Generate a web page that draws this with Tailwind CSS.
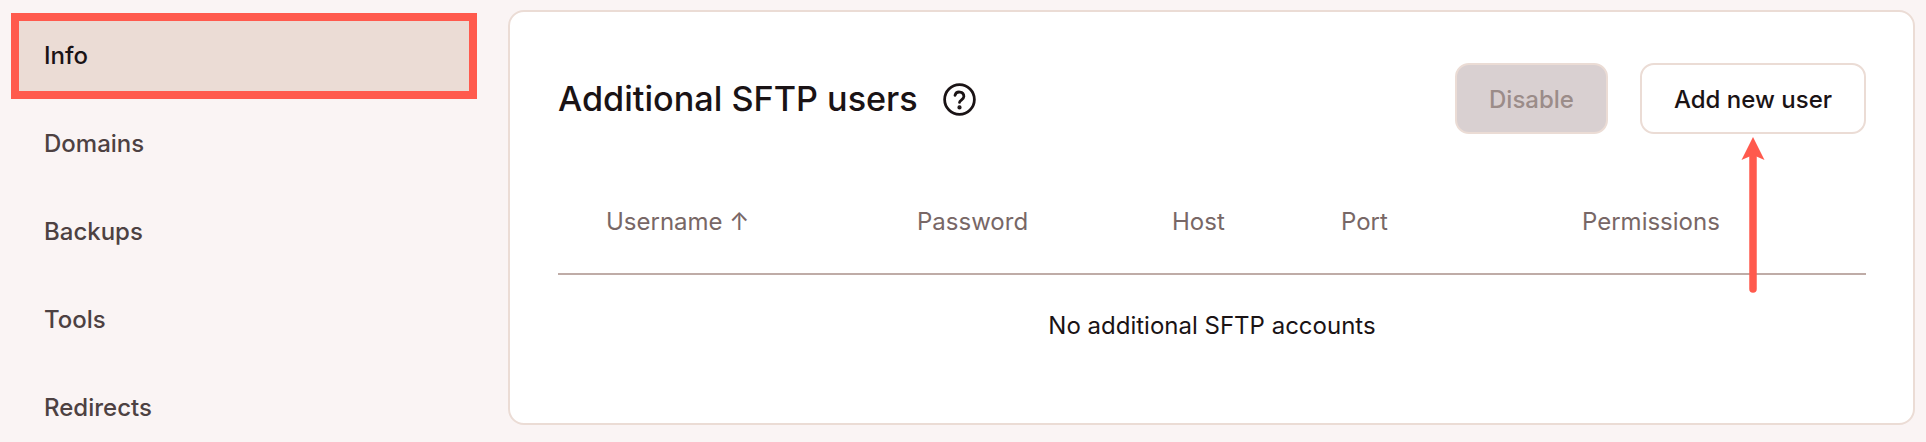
<!DOCTYPE html>
<html lang="en">
<head>
  <meta charset="UTF-8">
  <title>Additional SFTP users</title>
  <script src="https://cdn.jsdelivr.net/npm/@tailwindcss/browser@4"></script>
</head>
<body class="bg-[#faf4f4] h-[442px] overflow-hidden font-['Inter',sans-serif] text-[#1a1315]">

  <div class="flex h-[442px]">
    <!-- Sidebar -->
    <nav class="w-[508px] shrink-0 pl-[11px] pt-[13px] text-[24px] font-medium text-[#4d4142]">
      <a class="flex items-center w-[466px] h-[86px] pl-[25px] bg-[#ebdcd5] border-8 border-[#ff5a4d] text-[#1a1315]">Info</a>
      <a class="flex items-center h-[88px] pl-[33px] mt-[1px]">Domains</a>
      <a class="flex items-center h-[88px] pl-[33px]">Backups</a>
      <a class="flex items-center h-[88px] pl-[33px]">Tools</a>
      <a class="flex items-center h-[88px] pl-[33px]">Redirects</a>
    </nav>

    <!-- Card -->
    <main class="relative w-[1407px] h-[415px] mt-[10px] bg-white border-2 border-[#ebdcd5] rounded-[16px] pl-[48px] pr-[47px] pt-[51px]">
      <div class="flex items-center justify-between">
        <div class="flex items-center gap-[24px] pt-[2px]">
          <h2 class="text-[34.2px] font-medium leading-none">Additional SFTP users</h2>
          <svg class="w-[35px] h-[35px]" viewBox="0 0 24 24" fill="none" stroke="#1a1315" stroke-width="1.9" stroke-linecap="round" stroke-linejoin="round">
            <circle cx="12" cy="12" r="10.2"/>
            <path d="M8.9 9.2a3.1 3.1 0 0 1 6.1.8c0 2-3 2.7-3 4"/>
            <circle cx="12" cy="17.4" r="0.5" fill="#1a1315"/>
          </svg>
        </div>
        <div class="flex gap-[32px]">
          <button class="w-[153px] h-[71px] pt-[2px] rounded-[14px] border-2 border-[#ebdcd5] bg-[#d9d0d1] text-[#9b8c89] text-[24px] font-medium">Disable</button>
          <button class="w-[226px] h-[71px] pt-[2px] rounded-[14px] border-2 border-[#ebdcd5] bg-white text-[24px] font-medium">Add new user</button>
        </div>
      </div>

      <!-- Table -->
      <div class="grid grid-cols-[311px_255px_169px_241px_1fr] items-center h-[107px] mt-[34px] pt-[2px] pl-[48px] border-b-2 border-[#bfaca7] text-[24px] text-[#786766]">
        <span>Username ↑</span>
        <span>Password</span>
        <span>Host</span>
        <span>Port</span>
        <span>Permissions</span>
      </div>
      <p class="text-center text-[24px] mt-[37px] leading-[28px]">No additional SFTP accounts</p>

      <!-- Arrow annotation -->
      <svg class="absolute left-[1231px] top-[125px] w-[24px] h-[156px]" viewBox="0 0 24 156">
        <path d="M12 0 L23.5 23 L12 18 L0.5 23 Z" fill="#ff5a4d"/>
        <path d="M12 16 V152" stroke="#ff5a4d" stroke-width="7.5" stroke-linecap="round"/>
      </svg>
    </main>
  </div>

</body>
</html>
